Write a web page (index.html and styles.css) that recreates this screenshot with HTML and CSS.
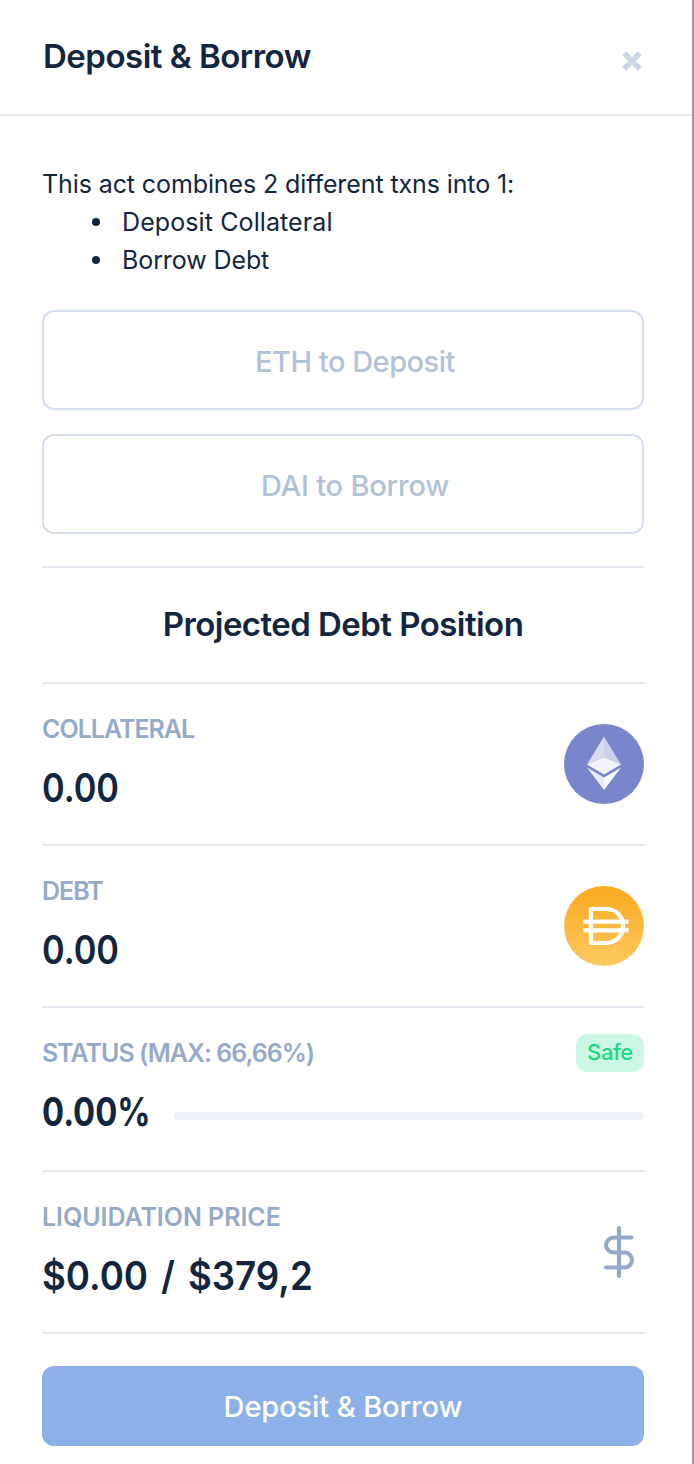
FILE: index.html
```
<!DOCTYPE html>
<html lang="en">

<head>
    <meta charset="UTF-8">
    <meta name="viewport" content="width=device-width, initial-scale=1.0">
    <title>Deposit & Borrow</title>
    <link rel="stylesheet" href="styles.css">
</head>

<body>
    <div class="modal">
        <header class="modal-header">
            <h1>Deposit &amp; Borrow</h1>
            <button class="close" aria-label="Close">
                <svg width="20" height="20" viewBox="0 0 20 20">
                    <path d="M2.2 2.2l15.6 15.6M17.8 2.2L2.2 17.8" stroke="currentColor" stroke-width="5.4" />
                </svg>
            </button>
        </header>

        <main class="modal-body">
            <div class="intro">
                <p>This act combines 2 different txns into 1:</p>
                <ul>
                    <li class="deposit">Deposit Collateral</li>
                    <li>Borrow Debt</li>
                </ul>
            </div>

            <div class="field">ETH to Deposit</div>
            <div class="field dai">DAI to Borrow</div>

            <h2>Projected Debt Position</h2>

            <section class="row">
                <div>
                    <h3>COLLATERAL</h3>
                    <div class="value">0.00</div>
                </div>
                <svg width="80" height="80" viewBox="0 0 80 80">
                    <circle cx="40" cy="40" r="40" fill="#7a86cb" />
                    <path d="M40 12.500L23 40.500 40 33z" fill="#d7daf0" />
                    <path d="M40 12.500l17 28L40 33z" fill="#cdd1ec" />
                    <path d="M40 33L23 40.500l17 10 17-10z" fill="#f3f4fb" />
                    <path d="M23 43.500L40 66V53.500z" fill="#e8eaf6" />
                    <path d="M57 43.500L40 66V53.500z" fill="#f8f8fd" />
                </svg>
            </section>

            <section class="row">
                <div>
                    <h3>DEBT</h3>
                    <div class="value">0.00</div>
                </div>
                <svg width="80" height="80" viewBox="0 0 80 80">
                    <defs>
                        <linearGradient id="dai" x1="0" y1="0" x2="0" y2="1">
                            <stop offset="0" stop-color="#f9a91e" />
                            <stop offset="1" stop-color="#fcca60" />
                        </linearGradient>
                    </defs>
                    <circle cx="40" cy="40" r="40" fill="url(#dai)" />
                    <path d="M27 23h14c11 0 18 7 18 17s-7 17-18 17H27zM19.500 35.700h45M19.500 44.400h45" fill="none" stroke="#fff" stroke-width="4.200" />
                </svg>
            </section>

            <section class="row status">
                <div class="status-top">
                    <h3>STATUS (MAX: 66,66%)</h3>
                    <span class="badge">Safe</span>
                </div>
                <div class="status-bottom">
                    <div class="value percent">0.00%</div>
                    <div class="progress"></div>
                </div>
            </section>

            <section class="row">
                <div>
                    <h3 class="liquidation">LIQUIDATION PRICE</h3>
                    <div class="value price">$0.00 / $379,2</div>
                </div>
                <svg class="dollar" width="50" height="54" viewBox="0 0 50 54">
                    <path d="M25 3v48M37.500 12.500H20a8 7.500 0 0 0 0 15h10.500a7.500 7.500 0 0 1 0 15H12" fill="none" stroke="currentColor" stroke-width="4.200" stroke-linecap="round" />
                </svg>
            </section>

            <button class="submit">Deposit &amp; Borrow</button>
        </main>
    </div>
</body>

</html>
```
FILE: styles.css
```
* {
    box-sizing: border-box;
}

body {
    margin: 0;
    font-family: Inter, "Liberation Sans", sans-serif;
    color: #12263f;
    background-color: #fff;
}

h1,
h2,
h3,
p,
ul {
    margin: 0;
    padding: 0;
}

button {
    border: 0;
    padding: 0;
    font-family: inherit;
}

.modal {
    height: 1464px;
    border-right: 2px solid #9299a3;
}

.modal-header {
    display: flex;
    justify-content: space-between;
    align-items: center;
    height: 116px;
    padding: 0 50px 0 43px;
    border-bottom: 2px solid #e2e9f5;
}

.close {
    display: flex;
    margin-top: 8px;
    background: none;
    color: #ccd5e6;
}

h1,
h2 {
    font-size: 33px;
    font-weight: 600;
    line-height: 40px;
    letter-spacing: -0.55px;
    white-space: nowrap;
}

h1 {
    margin-top: -2px;
    letter-spacing: -0.5px;
}

.modal-body {
    padding: 49px 48px 0 42px;
}

.intro {
    margin-bottom: 31px;
    font-size: 25px;
    line-height: 38px;
    letter-spacing: -0.1px;
    white-space: nowrap;
}

.intro li {
    display: flex;
    align-items: center;
    padding-left: 50px;
}

.intro li::before {
    content: "";
    width: 8px;
    height: 8px;
    margin-right: 22px;
    border-radius: 50%;
    background-color: #12263f;
}

.intro .deposit {
    letter-spacing: 0.1px;
}

.field {
    display: flex;
    justify-content: center;
    align-items: center;
    height: 100px;
    margin-bottom: 24px;
    padding: 2px 0 0 24px;
    border: 2px solid #d5ddee;
    border-radius: 12px;
    color: #b1c2d9;
    font-size: 29px;
    font-weight: 500;
    letter-spacing: -0.5px;
}

.dai {
    letter-spacing: -0.2px;
}

h2 {
    display: flex;
    justify-content: center;
    align-items: center;
    height: 118px;
    margin-top: 32px;
    padding-bottom: 2px;
    border-top: 2px solid #e2e9f5;
    border-bottom: 2px solid #e2e9f5;
}

.row {
    display: flex;
    justify-content: space-between;
    align-items: center;
    height: 162px;
    border-bottom: 2px solid #e2e9f5;
}

.row > div:first-child {
    margin-top: -4px;
}

h3 {
    color: #95aac9;
    font-size: 25px;
    font-weight: 600;
    line-height: 34px;
    letter-spacing: -1px;
    white-space: nowrap;
}

.liquidation {
    letter-spacing: -0.05px;
}

/* narrow the figures */
.value {
    margin-top: 18px;
    font-size: 39px;
    font-weight: 600;
    line-height: 48px;
    white-space: nowrap;
    transform: scaleX(0.88);
    transform-origin: left;
}

.percent {
    width: 108px;
    font-weight: 700;
    transform: scaleX(0.84);
}

.price {
    transform: scaleX(0.94);
    word-spacing: 4px;
}

.status {
    flex-direction: column;
    justify-content: center;
    align-items: stretch;
    height: 164px;
}

.status-top,
.status-bottom {
    display: flex;
    justify-content: space-between;
    align-items: center;
}

.status-top {
    height: 34px;
}

.status-bottom {
    margin-bottom: 2px;
}

.badge {
    display: flex;
    justify-content: center;
    align-items: center;
    width: 68px;
    height: 38px;
    padding-bottom: 2px;
    border-radius: 12px;
    background-color: #ccf7e5;
    color: #1bd683;
    font-size: 22px;
    font-weight: 500;
    letter-spacing: -0.4px;
}

.progress {
    width: 470px;
    height: 8px;
    margin-top: 25px;
    border-radius: 4px;
    background-color: #edf2f9;
}

.dollar {
    color: #95aac9;
}

.submit {
    display: block;
    width: 100%;
    height: 80px;
    margin-top: 32px;
    border-radius: 12px;
    background-color: #8cb0e8;
    color: #fff;
    font-size: 29px;
    font-weight: 500;
    letter-spacing: -0.1px;
}
```
